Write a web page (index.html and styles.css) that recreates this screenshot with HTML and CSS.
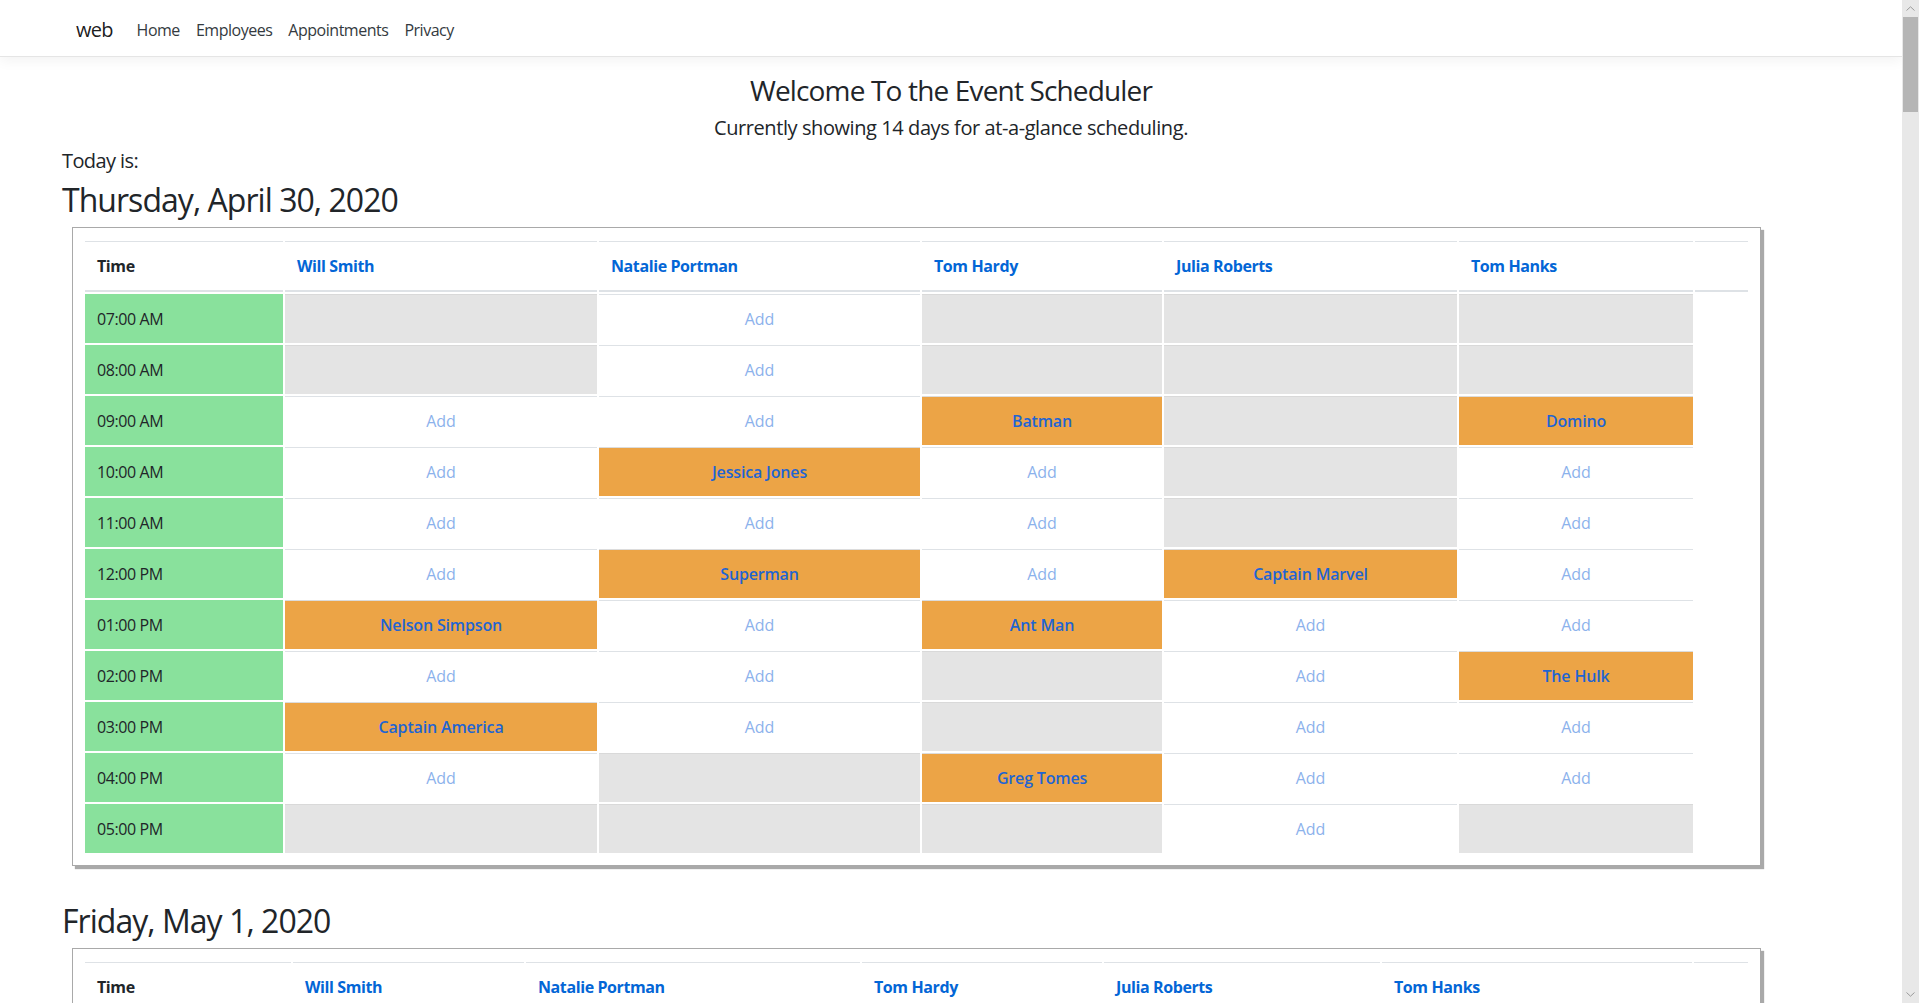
FILE: index.html
```html
<!DOCTYPE html>
<html lang="en">
<head>
<meta charset="utf-8">
<title>Home Page - web</title>
<link rel="stylesheet" href="styles.css">
</head>
<body>
<header class="site-header">
  <nav class="navbar">
    <a class="brand" href="#">web</a>
    <ul class="nav-links">
      <li><a href="#">Home</a></li>
      <li><a href="#">Employees</a></li>
      <li><a href="#">Appointments</a></li>
      <li><a href="#">Privacy</a></li>
    </ul>
  </nav>
</header>

<main class="page">
  <div class="intro">
    <h1 class="title">Welcome To the Event Scheduler</h1>
    <p class="subtitle">Currently showing 14 days for at-a-glance scheduling.</p>
  </div>
  <h5 class="today-label">Today is:</h5>

  <section class="day">
    <h2 class="day-title">Thursday, April 30, 2020</h2>
    <div class="schedule-box">
      <table class="schedule">
        <thead>
          <tr>
            <th style="width:198px">Time</th>
            <th style="width:312px"><a href="#">Will Smith</a></th>
            <th style="width:321px"><a href="#">Natalie Portman</a></th>
            <th style="width:240px"><a href="#">Tom Hardy</a></th>
            <th style="width:293px"><a href="#">Julia Roberts</a></th>
            <th style="width:234px"><a href="#">Tom Hanks</a></th>
            <th></th>
          </tr>
        </thead>
        <tbody>
          <tr><td class="time">07:00 AM</td><td class="off"></td><td class="open"><a href="#">Add</a></td><td class="off"></td><td class="off"></td><td class="off"></td></tr>
          <tr><td class="time">08:00 AM</td><td class="off"></td><td class="open"><a href="#">Add</a></td><td class="off"></td><td class="off"></td><td class="off"></td></tr>
          <tr><td class="time">09:00 AM</td><td class="open"><a href="#">Add</a></td><td class="open"><a href="#">Add</a></td><td class="booked"><a href="#">Batman</a></td><td class="off"></td><td class="booked"><a href="#">Domino</a></td></tr>
          <tr><td class="time">10:00 AM</td><td class="open"><a href="#">Add</a></td><td class="booked"><a href="#">Jessica Jones</a></td><td class="open"><a href="#">Add</a></td><td class="off"></td><td class="open"><a href="#">Add</a></td></tr>
          <tr><td class="time">11:00 AM</td><td class="open"><a href="#">Add</a></td><td class="open"><a href="#">Add</a></td><td class="open"><a href="#">Add</a></td><td class="off"></td><td class="open"><a href="#">Add</a></td></tr>
          <tr><td class="time">12:00 PM</td><td class="open"><a href="#">Add</a></td><td class="booked"><a href="#">Superman</a></td><td class="open"><a href="#">Add</a></td><td class="booked"><a href="#">Captain Marvel</a></td><td class="open"><a href="#">Add</a></td></tr>
          <tr><td class="time">01:00 PM</td><td class="booked"><a href="#">Nelson Simpson</a></td><td class="open"><a href="#">Add</a></td><td class="booked"><a href="#">Ant Man</a></td><td class="open"><a href="#">Add</a></td><td class="open"><a href="#">Add</a></td></tr>
          <tr><td class="time">02:00 PM</td><td class="open"><a href="#">Add</a></td><td class="open"><a href="#">Add</a></td><td class="off"></td><td class="open"><a href="#">Add</a></td><td class="booked"><a href="#">The Hulk</a></td></tr>
          <tr><td class="time">03:00 PM</td><td class="booked"><a href="#">Captain America</a></td><td class="open"><a href="#">Add</a></td><td class="off"></td><td class="open"><a href="#">Add</a></td><td class="open"><a href="#">Add</a></td></tr>
          <tr><td class="time">04:00 PM</td><td class="open"><a href="#">Add</a></td><td class="off"></td><td class="booked"><a href="#">Greg Tomes</a></td><td class="open"><a href="#">Add</a></td><td class="open"><a href="#">Add</a></td></tr>
          <tr><td class="time">05:00 PM</td><td class="off"></td><td class="off"></td><td class="off"></td><td class="open"><a href="#">Add</a></td><td class="off"></td></tr>
        </tbody>
      </table>
    </div>
  </section>

  <section class="day">
    <h2 class="day-title">Friday, May 1, 2020</h2>
    <div class="schedule-box">
      <table class="schedule">
        <thead>
          <tr>
            <th style="width:206px">Time</th>
            <th style="width:231px"><a href="#">Will Smith</a></th>
            <th style="width:334px"><a href="#">Natalie Portman</a></th>
            <th style="width:240px"><a href="#">Tom Hardy</a></th>
            <th style="width:276px"><a href="#">Julia Roberts</a></th>
            <th style="width:310px"><a href="#">Tom Hanks</a></th>
            <th></th>
          </tr>
        </thead>
        <tbody>
          <tr><td class="time">07:00 AM</td><td class="off"></td><td class="open"><a href="#">Add</a></td><td class="off"></td><td class="off"></td><td class="off"></td></tr>
          <tr><td class="time">08:00 AM</td><td class="off"></td><td class="open"><a href="#">Add</a></td><td class="off"></td><td class="off"></td><td class="off"></td></tr>
          <tr><td class="time">09:00 AM</td><td class="open"><a href="#">Add</a></td><td class="open"><a href="#">Add</a></td><td class="open"><a href="#">Add</a></td><td class="off"></td><td class="open"><a href="#">Add</a></td></tr>
          <tr><td class="time">10:00 AM</td><td class="open"><a href="#">Add</a></td><td class="open"><a href="#">Add</a></td><td class="open"><a href="#">Add</a></td><td class="off"></td><td class="open"><a href="#">Add</a></td></tr>
        </tbody>
      </table>
    </div>
  </section>
</main>

<div class="scrollbar" aria-hidden="true">
  <div class="sb-arrow">
    <svg width="9" height="5" viewBox="0 0 9 5"><path d="M0.5 4.5 L4.5 0.8 L8.5 4.5" fill="none" stroke="#9a9a9a" stroke-width="1"/></svg>
  </div>
  <div class="sb-track">
    <div class="sb-thumb"></div>
  </div>
  <div class="sb-arrow">
    <svg width="9" height="5" viewBox="0 0 9 5"><path d="M0.5 0.5 L4.5 4.2 L8.5 0.5" fill="none" stroke="#9a9a9a" stroke-width="1"/></svg>
  </div>
</div>
</body>
</html>
```

FILE: styles.css
```css
html {
  overflow: hidden;
}

* {
  box-sizing: border-box;
}

body {
  margin: 0 17px 0 0;
  font-family: "Segoe UI", "Open Sans", Roboto, "Helvetica Neue", Arial, sans-serif;
  font-size: 16px;
  line-height: 1.5;
  color: #212529;
  background: #fff;
}

a {
  text-decoration: none;
}

/* Navbar */
.site-header {
  margin-bottom: 16px;
}

.navbar {
  display: flex;
  align-items: center;
  height: 57px;
  padding: 10px 16px 6px 76px;
  background: #fff;
  border-bottom: 1px solid #e5e5e5;
  box-shadow: 0 4px 12px rgba(0, 0, 0, 0.05);
}

.brand {
  font-size: 20px;
  line-height: 30px;
  padding: 5px 0;
  margin-right: 16px;
  color: rgba(0, 0, 0, 0.9);
  letter-spacing: -0.04em;
}

.nav-links {
  display: flex;
  list-style: none;
  margin: 0;
  padding: 0;
}

.nav-links a {
  display: block;
  padding: 8px;
  line-height: 24px;
  color: #343a40;
  letter-spacing: -0.03em;
}

/* Page */
.page {
  padding: 1px 62px 0 62px;
}

.intro {
  text-align: center;
}

.title {
  font-size: 28px;
  line-height: 1.2;
  font-weight: 400;
  margin: 0 0 8px;
  letter-spacing: -0.03em;
}

.subtitle {
  font-size: 20px;
  line-height: 24px;
  margin: 0 0 9px;
  letter-spacing: -0.021em;
}

.today-label {
  font-size: 20px;
  line-height: 24px;
  font-weight: 400;
  margin: 0 0 8px;
  letter-spacing: -0.03em;
}

.day-title {
  font-size: 32px;
  line-height: 1.2;
  font-weight: 400;
  margin: 0 0 8px;
  letter-spacing: -0.03em;
}

.schedule-box {
  width: 1689px;
  margin: 1px 0 36px 10px;
  padding: 11px 10px 10px 10px;
  border: 1px solid #a9a9a9;
  box-shadow: 3px 3px 1px #a9a9a9;
  background: #fff;
}

.schedule {
  width: 100%;
  table-layout: fixed;
  border-collapse: separate;
  border-spacing: 2px;
}

.schedule th {
  padding: 12px;
  line-height: 24px;
  text-align: left;
  vertical-align: bottom;
  font-weight: 700;
  color: #212529;
  letter-spacing: -0.025em;
  border-top: 1px solid #dee2e6;
  border-bottom: 2px solid #dee2e6;
}

.schedule th a {
  color: #0366d6;
}

.schedule td {
  padding: 12px;
  line-height: 24px;
  vertical-align: top;
  text-align: center;
  border-top: 1px solid #dee2e6;
}

.schedule td.time {
  text-align: left;
  background: #89e19c;
  border-top-color: #89e19c;
  letter-spacing: -0.026em;
}

.schedule td.off {
  background: #e4e4e4;
  border-top-color: #d9d9d9;
}

.schedule td.open a {
  color: #8cb2ec;
}

.schedule td.booked {
  background: #eca446;
  border-top-color: #dcdcdc;
}

.schedule td.booked a {
  color: #1f64d2;
  font-weight: 600;
  letter-spacing: -0.01em;
}

/* Fake scrollbar (overlay at window edge) */
.scrollbar {
  position: fixed;
  top: 0;
  right: 0;
  width: 17px;
  height: 100%;
  display: flex;
  flex-direction: column;
  background: #e8e8e8;
}

.sb-arrow {
  height: 17px;
  display: flex;
  align-items: center;
  justify-content: center;
  flex: none;
}

.sb-track {
  flex: 1;
  padding: 0 1px;
}

.sb-thumb {
  height: 95px;
  background: #b5b5b5;
}
```
